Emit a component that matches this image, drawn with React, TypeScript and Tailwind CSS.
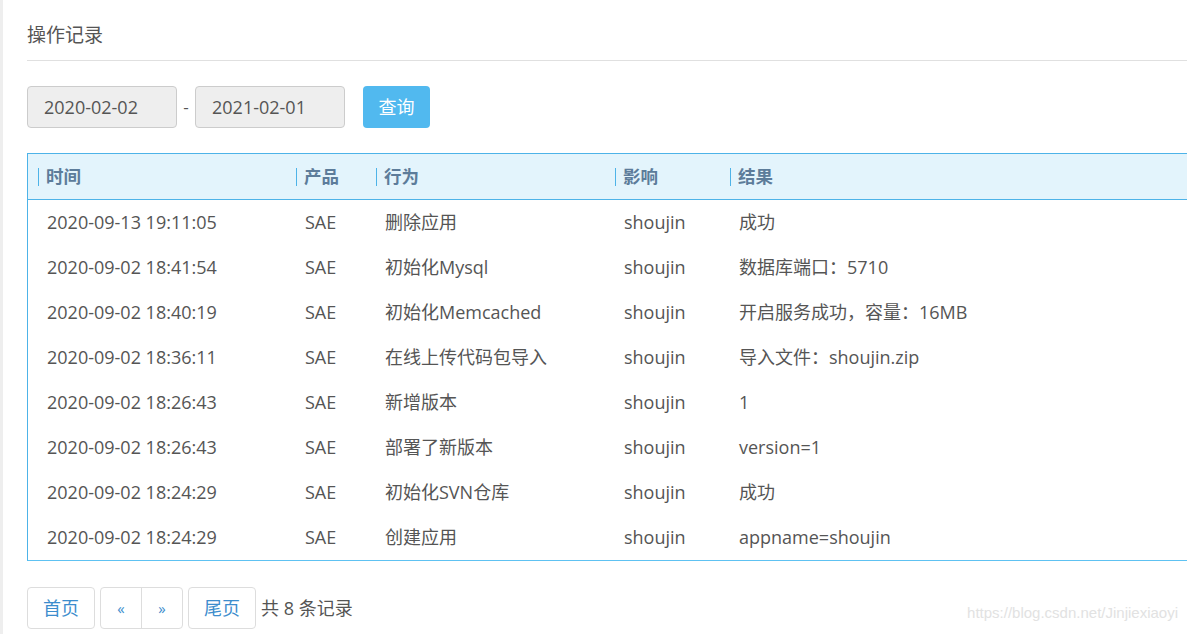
import React from "react";

interface LogRow {
  time: string;
  product: string;
  action: string;
  target: string;
  result: string;
}

const rows: LogRow[] = [
  { time: "2020-09-13 19:11:05", product: "SAE", action: "删除应用", target: "shoujin", result: "成功" },
  { time: "2020-09-02 18:41:54", product: "SAE", action: "初始化Mysql", target: "shoujin", result: "数据库端口：5710" },
  { time: "2020-09-02 18:40:19", product: "SAE", action: "初始化Memcached", target: "shoujin", result: "开启服务成功，容量：16MB" },
  { time: "2020-09-02 18:36:11", product: "SAE", action: "在线上传代码包导入", target: "shoujin", result: "导入文件：shoujin.zip" },
  { time: "2020-09-02 18:26:43", product: "SAE", action: "新增版本", target: "shoujin", result: "1" },
  { time: "2020-09-02 18:26:43", product: "SAE", action: "部署了新版本", target: "shoujin", result: "version=1" },
  { time: "2020-09-02 18:24:29", product: "SAE", action: "初始化SVN仓库", target: "shoujin", result: "成功" },
  { time: "2020-09-02 18:24:29", product: "SAE", action: "创建应用", target: "shoujin", result: "appname=shoujin" },
];

const headers = ["时间", "产品", "行为", "影响", "结果"];
const cols = "grid grid-cols-[258px_80px_239px_115px_1fr]";

const App: React.FC = () => {
  return (
    <div className="relative h-[634px] w-[1187px] overflow-hidden bg-white font-['Open_Sans','Noto_Sans_CJK_SC',sans-serif] text-[#555]">
      <div className="h-full border-l-[3px] border-[#eeeeee] pl-[24px]">
        {/* Title */}
        <div className="pt-[22px]">
          <h3 className="text-[19px] leading-[26px] text-[#555]">操作记录</h3>
          <div className="mt-[12px] h-px bg-[#e0e0e0]" />
        </div>

        {/* Date filter */}
        <div className="mt-[25px] flex items-center">
          <div className="flex h-[42px] w-[150px] items-center rounded-[4px] border border-[#cccccc] bg-[#eeeeee] pl-[16px] text-[18px] text-[#555]">
            2020-02-02
          </div>
          <span className="w-[18px] text-center text-[17px]">-</span>
          <div className="flex h-[42px] w-[150px] items-center rounded-[4px] border border-[#cccccc] bg-[#eeeeee] pl-[16px] text-[18px] text-[#555]">
            2021-02-01
          </div>
          <button className="ml-[18px] h-[42px] w-[67px] rounded-[4px] bg-[#51b9ef] text-[18px] text-white">
            查询
          </button>
        </div>

        {/* Table */}
        <div className="mt-[25px] w-[1200px] border border-[#4db3e8] border-b-[#5ec2f2]">
          <div className={`${cols} h-[46px] items-center border-b border-[#4db3e8] bg-[#e3f4fc]`}>
            {headers.map((h) => (
              <div key={h} className="flex items-center pl-[10px]">
                <span className="mr-[7px] h-[18px] w-px bg-[#4db3e8]" />
                <span className="text-[17.5px] font-bold text-[#5c7c9a]">{h}</span>
              </div>
            ))}
          </div>
          {rows.map((r, i) => (
            <div key={i} className={`${cols} h-[45px] items-center text-[18px] text-[#555]`}>
              <div className="pl-[19px]">{r.time}</div>
              <div className="pl-[19px]">{r.product}</div>
              <div className="pl-[19px]">{r.action}</div>
              <div className="pl-[19px]">{r.target}</div>
              <div className="pl-[19px]">{r.result}</div>
            </div>
          ))}
        </div>

        {/* Pagination */}
        <div className="mt-[26px] flex items-center text-[18px]">
          <button className="h-[42px] w-[68px] rounded-[4px] border border-[#dddddd] text-[#3c8dcd]">首页</button>
          <div className="ml-[5px] flex h-[42px] rounded-[4px] border border-[#dddddd] text-[#3c8dcd]">
            <button className="w-[41px] border-r border-[#dddddd] text-[15px]">«</button>
            <button className="w-[40px] text-[15px]">»</button>
          </div>
          <button className="ml-[5px] h-[42px] w-[68px] rounded-[4px] border border-[#dddddd] text-[#3c8dcd]">尾页</button>
          <span className="ml-[5px] text-[#555]">共 8 条记录</span>
        </div>
      </div>

      {/* Watermark */}
      <span className="absolute bottom-[10px] right-[9px] font-['Liberation_Sans',sans-serif] text-[15px] text-[#e2e2e2]">
        https://blog.csdn.net/Jinjiexiaoyi
      </span>
    </div>
  );
};

export default App;
